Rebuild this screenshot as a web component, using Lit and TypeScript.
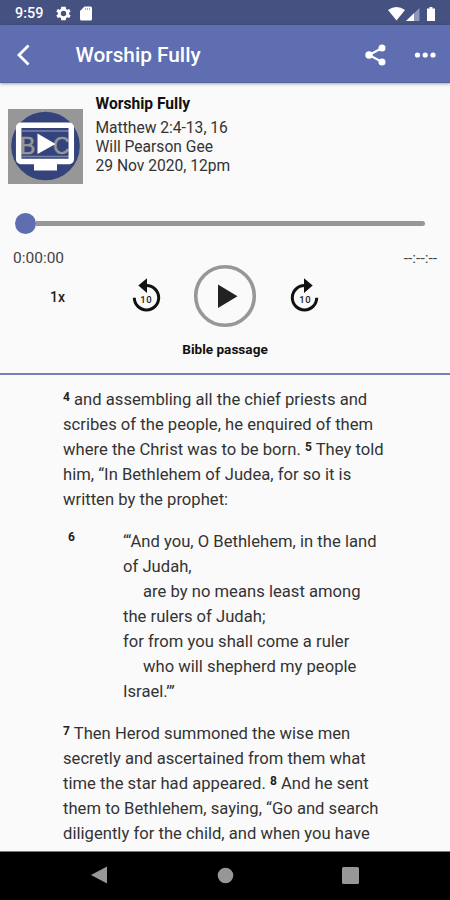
import { LitElement, html, css, svg } from "lit";
import { customElement, property } from "lit/decorators.js";

@customElement("skip-button")
class SkipButton extends LitElement {
  @property({ type: Boolean }) forward = false;
  static styles = css`
    :host { display: block; width: 32px; height: 38px; }
    svg { display: block; }
    text { font: 500 9.5px Roboto, sans-serif; letter-spacing: 0.6px; fill: #222; }
  `;
  render() {
    const arrow = svg`
      <path d="M16.500 8.600A12.200 12.200 0 1 1 4.300 20.800" fill="none" stroke="#111" stroke-width="3"></path>
      <path d="M17 1.200V16L8.300 8.600Z" fill="#111"></path>`;
    return html`<svg width="32" height="38" viewBox="0 0 32 38">
      ${this.forward ? svg`<g transform="translate(32 0) scale(-1 1)">${arrow}</g>` : arrow}
      <text x="16.300" y="25.500" text-anchor="middle">10</text>
    </svg>`;
  }
}

@customElement("app-root")
class AppRoot extends LitElement {
  static styles = css`
    :host { display: flex; flex-direction: column; width: 450px; height: 900px; overflow: hidden; background: #fafafa; font-family: Roboto, sans-serif; color: #333; }
    * { box-sizing: border-box; }
    svg { display: block; flex: none; }
    .status { height: 25px; flex: none; background: #455181; color: #fff; display: flex; align-items: center; padding: 2px 14px 0 15px; font-size: 14.4px; font-weight: 500; }
    .clock { width: 41px; }
    .card-icon { margin-left: 9px; }
    .fill { flex: 1; }
    .bar { height: 58px; flex: none; background: #5f6db1; display: flex; align-items: center; padding: 2px 14px 0 16px; color: #fff; box-shadow: 0 1px 3px rgba(0,0,0,.35); border-bottom: 1px solid #5462a6; }
    .title { font-size: 20.8px; font-weight: 500; margin-left: 44.5px; flex: 1; }
    .share { margin-right: 27px; }
    .meta { display: flex; height: 109px; flex: none; padding: 11px 0 0 8px; }
    .art { margin-top: 15px; }
    .info { margin: 1px 0 0 12.5px; font-size: 15.6px; line-height: 19px; white-space: nowrap; }
    .name { font-size: 15.6px; font-weight: 700; color: #111; margin-bottom: 5px; }
    .player { flex: none; height: 184px; }
    .track { display: flex; align-items: center; height: 22px; margin-left: 15px; margin-top: 20px; }
    .knob { width: 21px; height: 21px; border-radius: 50%; background: #5f6db1; }
    .line { width: 389px; height: 5px; background: #979797; border-radius: 0 3px 3px 0; }
    .times { display: flex; justify-content: space-between; margin-top: 14px; padding: 0 13px; font-size: 15.5px; line-height: 20px; color: #444; }
    .controls { display: flex; align-items: center; margin-top: -4px; height: 64px; }
    .speed { margin-left: 50px; width: 79.5px; font-size: 14px; font-weight: 500; padding-top: 1px; color: #222; }
    .play { margin: 0 32px 0 31.5px; }
    .section { height: 47px; text-align: center; font-size: 13.6px; font-weight: 700; line-height: 18px; padding-top: 12px; color: #111; border-bottom: 2px solid #7380bc; }
    .passage { flex: 1; padding: 11px 0 0 63px; font-size: 16.6px; line-height: 25px; letter-spacing: .02px; white-space: nowrap; overflow: hidden; color: #333; }
    p { margin: 0 0 17px; }
    b { font-size: 12px; line-height: 1; position: relative; top: -4px; color: #222; }
    .verse { display: flex; }
    .verse b { top: 2px; left: 5px; width: 60px; }
    .in { padding-left: 20px; }
    .nav { height: 49px; flex: none; background: #000; display: flex; align-items: center; justify-content: space-between; padding: 0 91px; border-top: 1px solid #777; }
    .nav svg { position: relative; top: -1px; }
  `;
  render() {
    return html`
      <div class="status">
        <span class="clock">9:59</span>
        <svg width="15" height="15" viewBox="2 2 20 20"><path fill="#fff" fill-rule="evenodd" d="M19.400 13a7 7 0 0 0 0-2l2.100-1.600-2-3.500-2.500 1a7.500 7.500 0 0 0-1.700-1L15 3H9l-.4 2.900a7.500 7.500 0 0 0-1.700 1l-2.500-1-2 3.500L4.600 11a7 7 0 0 0 0 2l-2.200 1.600 2 3.500 2.500-1a7.500 7.500 0 0 0 1.700 1L9 21h6l.4-2.900a7.500 7.500 0 0 0 1.700-1l2.500 1 2-3.500ZM12 15.600a3.600 3.600 0 1 1 0-7.200 3.600 3.600 0 0 1 0 7.200Z"></path></svg>
        <svg class="card-icon" width="12" height="15" viewBox="0 0 12 15"><path fill="#fff" d="M4.500.5H10.500Q12 .5 12 2V13Q12 14.500 10.500 14.500H1.500Q0 14.500 0 13V5Z"></path><path stroke="#8993bb" stroke-width=".8" d="M5.500 2v2M7.500 2v2M9.500 2v2"></path></svg>
        <span class="fill"></span>
        <svg width="48" height="16" viewBox="0 0 48 16"><path fill="#fff" d="M0 4Q8.500-2 17 4L8.500 14.500Z"></path><path fill="#8e98bc" d="M31.500 2V15H18Z"></path><path fill="#fff" d="M26 7.300V15H18Z"></path><path fill="#fff" d="M41.500 1h3v1.500H47V15H39V2.500h2.500Z"></path></svg>
      </div>
      <div class="bar">
        <svg width="15" height="22" viewBox="0 0 15 22"><path d="M12.500 1.500 3 11l9.500 9.500" fill="none" stroke="#fff" stroke-width="2.800"></path></svg>
        <span class="title">Worship Fully</span>
        <svg class="share" width="22" height="22" viewBox="0 0 22 22"><path d="M17 4 4 11l13 7" fill="none" stroke="#fff" stroke-width="2"></path><g fill="#fff"><circle cx="17" cy="4" r="3.500"></circle><circle cx="4" cy="11" r="3.700"></circle><circle cx="17" cy="18" r="3.500"></circle></g></svg>
        <svg width="22" height="6" viewBox="0 0 22 6"><g fill="#fff"><circle cx="3.500" cy="3" r="2.600"></circle><circle cx="11.200" cy="3" r="2.600"></circle><circle cx="19" cy="3" r="2.600"></circle></g></svg>
      </div>
      <div class="meta">
        <svg class="art" width="75" height="75" viewBox="0 0 75 75">
          <rect width="75" height="75" fill="#979797"></rect><circle cx="37.500" cy="37" r="34.300" fill="#35437c"></circle>
          <path d="M14 22H61M14 47.500H61" stroke="#7c85a5" stroke-width="1.300"></path>
          <g font-family="Liberation Sans, Arial, sans-serif" font-size="23" fill="#979797" stroke="#979797" stroke-width=".5"><text x="12" y="45">B</text><text x="45" y="45">C</text></g>
          <rect x="10.700" y="16.300" width="52.600" height="36.200" rx="2" fill="none" stroke="#fff" stroke-width="5.500"></rect>
          <path d="M26 54H49V61.500H26Z" fill="#fff"></path><path d="M29.500 24.500 47.500 35 29.500 45Z" fill="#fff"></path>
        </svg>
        <div class="info"><div class="name">Worship Fully</div><div>Matthew 2:4-13, 16</div><div>Will Pearson Gee</div><div>29 Nov 2020, 12pm</div></div>
      </div>
      <div class="player">
        <div class="track"><div class="knob"></div><div class="line"></div></div>
        <div class="times"><span>0:00:00</span><span>--:--:--</span></div>
        <div class="controls">
          <span class="speed">1x</span>
          <skip-button></skip-button>
          <svg class="play" width="64" height="64" viewBox="0 0 64 64"><circle cx="32" cy="32" r="29.300" fill="none" stroke="#979797" stroke-width="3.600"></circle><path fill="#222" d="M25 20.500 44.500 32.300 25 44Z"></path></svg>
          <skip-button forward></skip-button>
        </div>
        <div class="section">Bible passage</div>
      </div>
      <div class="passage">
        <p><b>4</b> and assembling all the chief priests and<br>scribes of the people, he enquired of them<br>where the Christ was to be born. <b>5</b> They told<br>him, “In Bethlehem of Judea, for so it is<br>written by the prophet:</p>
        <p class="verse"><b>6</b><span>“‘And you, O Bethlehem, in the land<br>of Judah,<br><span class="in">are by no means least among</span><br>the rulers of Judah;<br>for from you shall come a ruler<br><span class="in">who will shepherd my people</span><br>Israel.’”</span></p>
        <p><b>7</b> Then Herod summoned the wise men<br>secretly and ascertained from them what<br>time the star had appeared. <b>8</b> And he sent<br>them to Bethlehem, saying, “Go and search<br>diligently for the child, and when you have</p>
      </div>
      <div class="nav">
        <svg width="17" height="18" viewBox="0 0 17 18"><path fill="#979797" d="M16 .5V17.500L0 9Z"></path></svg>
        <svg width="17" height="17" viewBox="0 0 17 17"><circle cx="8.500" cy="8.500" r="7.800" fill="#979797"></circle></svg>
        <svg width="17" height="17" viewBox="0 0 17 17"><rect width="17" height="17" rx="1.500" fill="#979797"></rect></svg>
      </div>`;
  }
}
